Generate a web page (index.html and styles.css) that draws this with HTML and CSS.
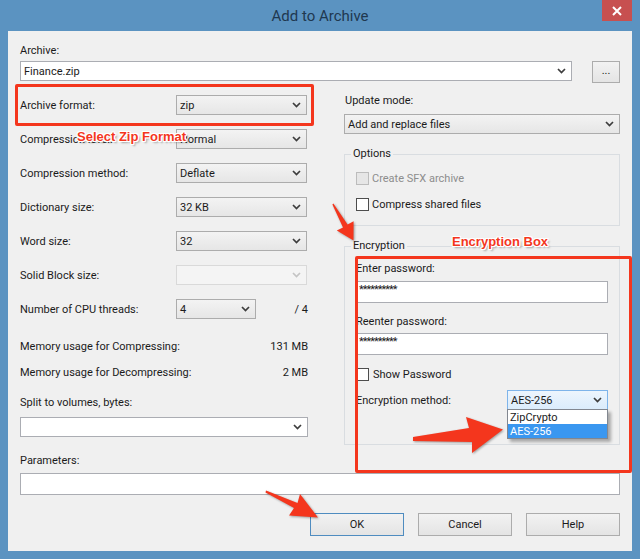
FILE: index.html
```html
<!DOCTYPE html>
<html>
<head>
<meta charset="utf-8">
<link rel="stylesheet" href="styles.css">
</head>
<body>
<div class="window">
  <div class="titlebar">
    <div class="title">Add to Archive</div>
    <div class="close"><svg width="10" height="10" viewBox="0 0 10 10"><path d="M1 1L9 9M9 1L1 9" stroke="#fff" stroke-width="2"/></svg></div>
  </div>
  <div class="content">
    <div class="lbl top-lbl">Archive:</div>
    <div class="archive-row">
      <div class="combo white archive-combo"><span class="val">Finance.zip</span><svg class="chev" width="9" height="6" viewBox="0 0 9 6"><path d="M1 1l3.5 3.5L8 1" fill="none" stroke="#3d3d3d" stroke-width="1.7"/></svg></div>
      <div class="btn browse">...</div>
    </div>
    <div class="cols">
      <div class="col-left">
        <div class="row"><span class="rl">Archive format:</span><div class="combo"><span class="val">zip</span><svg class="chev" width="9" height="6" viewBox="0 0 9 6"><path d="M1 1l3.5 3.5L8 1" fill="none" stroke="#3d3d3d" stroke-width="1.7"/></svg></div></div>
        <div class="row"><span class="rl">Compression level:</span><div class="combo"><span class="val">Normal</span><svg class="chev" width="9" height="6" viewBox="0 0 9 6"><path d="M1 1l3.5 3.5L8 1" fill="none" stroke="#3d3d3d" stroke-width="1.7"/></svg></div></div>
        <div class="row"><span class="rl">Compression method:</span><div class="combo"><span class="val">Deflate</span><svg class="chev" width="9" height="6" viewBox="0 0 9 6"><path d="M1 1l3.5 3.5L8 1" fill="none" stroke="#3d3d3d" stroke-width="1.7"/></svg></div></div>
        <div class="row"><span class="rl">Dictionary size:</span><div class="combo"><span class="val">32 KB</span><svg class="chev" width="9" height="6" viewBox="0 0 9 6"><path d="M1 1l3.5 3.5L8 1" fill="none" stroke="#3d3d3d" stroke-width="1.7"/></svg></div></div>
        <div class="row"><span class="rl">Word size:</span><div class="combo"><span class="val">32</span><svg class="chev" width="9" height="6" viewBox="0 0 9 6"><path d="M1 1l3.5 3.5L8 1" fill="none" stroke="#3d3d3d" stroke-width="1.7"/></svg></div></div>
        <div class="row"><span class="rl">Solid Block size:</span><div class="combo disabled"><span class="val"></span><svg class="chev" width="9" height="6" viewBox="0 0 9 6"><path d="M1 1l3.5 3.5L8 1" fill="none" stroke="#c4c4c4" stroke-width="1.7"/></svg></div></div>
        <div class="row"><span class="rl">Number of CPU threads:</span><div class="combo short"><span class="val">4</span><svg class="chev" width="9" height="6" viewBox="0 0 9 6"><path d="M1 1l3.5 3.5L8 1" fill="none" stroke="#3d3d3d" stroke-width="1.7"/></svg></div><span class="cpu-max">/ 4</span></div>
        <div class="mem first"><span>Memory usage for Compressing:</span><span>131 MB</span></div>
        <div class="mem"><span>Memory usage for Decompressing:</span><span>2 MB</span></div>
        <div class="lbl split-lbl">Split to volumes, bytes:</div>
        <div class="combo white split-combo"><span class="val"></span><svg class="chev" width="9" height="6" viewBox="0 0 9 6"><path d="M1 1l3.5 3.5L8 1" fill="none" stroke="#3d3d3d" stroke-width="1.7"/></svg></div>
      </div>
      <div class="col-right">
        <div class="lbl update-lbl">Update mode:</div>
        <div class="combo wide update-combo"><span class="val">Add and replace files</span><svg class="chev" width="9" height="6" viewBox="0 0 9 6"><path d="M1 1l3.5 3.5L8 1" fill="none" stroke="#3d3d3d" stroke-width="1.7"/></svg></div>
        <fieldset class="group options">
          <legend>Options</legend>
          <div class="check disabled"><span class="box"></span><span>Create SFX archive</span></div>
          <div class="check second"><span class="box"></span><span>Compress shared files</span></div>
        </fieldset>
        <fieldset class="group encryption">
          <legend>Encryption</legend>
          <div class="lbl">Enter password:</div>
          <div class="input pw pw1">**********</div>
          <div class="lbl re-lbl">Reenter password:</div>
          <div class="input pw pw2">**********</div>
          <div class="check show-pw"><span class="box"></span><span>Show Password</span></div>
          <div class="enc-row">
            <span>Encryption method:</span>
            <div class="enc-wrap">
              <div class="combo focus enc-combo"><span class="val">AES-256</span><svg class="chev" width="9" height="6" viewBox="0 0 9 6"><path d="M1 1l3.5 3.5L8 1" fill="none" stroke="#3d3d3d" stroke-width="1.7"/></svg></div>
              <div class="dropdown">
                <div class="item">ZipCrypto</div>
                <div class="item sel">AES-256</div>
              </div>
            </div>
          </div>
        </fieldset>
      </div>
    </div>
    <div class="lbl params-lbl">Parameters:</div>
    <div class="input params"></div>
    <div class="buttons">
      <div class="btn ok">OK</div>
      <div class="btn">Cancel</div>
      <div class="btn">Help</div>
    </div>

    <div class="redbox box-format"></div>
    <div class="redbox box-enc"></div>
    <div class="note note-zip">Select Zip Format</div>
    <div class="note note-enc">Encryption Box</div>
  </div>
  <svg class="arrows" width="640" height="559" viewBox="0 0 640 559">
    <polygon points="333.4,203.6 347.6,224.6 353.6,221.2 353.5,240.5 336.8,230.6 343,227.4 332.4,204.4" fill="#f4361d"/>
    <polygon points="413,437 469,428 466,417 503,429.5 472,453 472,442 413,441" fill="#f4361d"/>
    <polygon points="266,490.5 297.5,503 300,494 318,517.5 289,515.5 294,508 265.5,492.5" fill="#f4361d"/>
  </svg>
</div>
</body>
</html>
```
FILE: styles.css
```css
body {
  margin: 0;
  background: #ffffff;
}

.window {
  position: relative;
  width: 640px;
  height: 559px;
  box-sizing: border-box;
  background: #5b93c1;
  padding: 0 8px 8px 8px;
  font-family: Roboto, "Liberation Sans", sans-serif;
  font-size: 11px;
  color: #1b1b1b;
}

.titlebar {
  height: 31px;
  display: grid;
  grid-template-columns: 1fr auto 1fr;
  align-items: start;
}

.title {
  grid-column: 2;
  font-size: 15px;
  line-height: 32px;
  color: #1f3850;
}

.close {
  grid-column: 3;
  justify-self: end;
  width: 30px;
  height: 21px;
  background: #c75050;
  display: flex;
  align-items: center;
  justify-content: center;
}

.content {
  position: relative;
  height: 520px;
  box-sizing: border-box;
  background: #f0f0f0;
  padding: 12px 12px 0 12px;
}

.lbl {
  line-height: 14px;
  height: 14px;
}

.top-lbl {
  line-height: 16px;
}

.archive-row {
  display: flex;
  align-items: flex-start;
  margin-top: 4px;
  height: 22px;
}

.combo {
  box-sizing: border-box;
  width: 131px;
  height: 20px;
  border: 1px solid #acacac;
  background: linear-gradient(#f3f3f3, #e6e6e6);
  display: flex;
  align-items: center;
  padding: 0 5px 0 3px;
}

.combo .val {
  flex: 1;
  line-height: 18px;
  padding-top: 1px;
}

.combo.white {
  background: #ffffff;
  border-color: #abadb3;
}

.combo.disabled {
  background: #f4f4f4;
  border-color: #d9d9d9;
}

.combo.short {
  width: 80px;
}

.archive-combo {
  width: 552px;
}

.btn {
  box-sizing: border-box;
  width: 94px;
  height: 23px;
  border: 1px solid #acacac;
  background: linear-gradient(#f2f2f2, #e4e4e4);
  display: flex;
  align-items: center;
  justify-content: center;
}

.browse {
  margin-left: auto;
  width: 28px;
  height: 22px;
  padding-bottom: 3px;
}

.btn.ok {
  border-color: #4f8cc0;
}

.cols {
  display: flex;
  gap: 36px;
  margin-top: 5px;
}

.col-left {
  width: 288px;
}

.col-right {
  width: 276px;
}

.row {
  display: flex;
  align-items: center;
  height: 34px;
}

.rl {
  flex: 0 0 156px;
}

.cpu-max {
  margin-left: auto;
}

.mem {
  display: flex;
  justify-content: space-between;
  align-items: center;
  height: 26px;
  padding-top: 1px;
  box-sizing: border-box;
}

.mem.first {
  margin-top: 7px;
}

.split-lbl {
  margin-top: 11px;
}

.split-combo {
  width: 288px;
  margin-top: 7px;
}

.update-lbl {
  margin-top: 6px;
  padding-left: 1px;
}

.update-combo {
  width: 276px;
  margin-top: 6px;
}

.group {
  margin: 0;
  min-width: 0;
  border: 1px solid #d9dde1;
  padding: 9px 11px 13px 11px;
}

.group legend {
  padding: 0 2px;
  margin-left: -5px;
  line-height: 14px;
}

.options {
  margin-top: 13px;
}

.encryption {
  margin-top: 13px;
  padding-bottom: 34px;
}

.check {
  display: flex;
  align-items: center;
  gap: 3px;
  height: 16px;
}

.check .box {
  box-sizing: border-box;
  width: 13px;
  height: 13px;
  border: 1px solid #4d4d4d;
  background: #ffffff;
}

.check.disabled {
  color: #8d8d8d;
}

.check.disabled .box {
  border-color: #bcbcbc;
  background: #e6e6e6;
}

.check.second {
  margin-top: 10px;
}

.input {
  box-sizing: border-box;
  height: 22px;
  border: 1px solid #abadb3;
  background: #ffffff;
}

.pw {
  padding: 2px 0 0 2px;
  font-size: 11px;
  letter-spacing: -1px;
  line-height: 12px;
}

.pw1 {
  margin-top: 5px;
}

.re-lbl {
  margin-top: 12px;
}

.pw2 {
  margin-top: 4px;
}

.show-pw {
  margin-top: 11px;
  gap: 4px;
}

.enc-row {
  display: flex;
  align-items: center;
  justify-content: space-between;
  margin-top: 8px;
  height: 20px;
}

.enc-wrap {
  position: relative;
}

.enc-combo {
  width: 101px;
}

.combo.focus {
  border-color: #7eb4ea;
  background: linear-gradient(#edf5fd, #dbecfc);
}

.dropdown {
  position: absolute;
  top: 19px;
  left: 0;
  width: 101px;
  box-sizing: border-box;
  border: 1px solid #828790;
  background: #ffffff;
  box-shadow: 3px 3px 3px rgba(0, 0, 0, 0.3);
}

.item {
  height: 14px;
  line-height: 15px;
  padding-left: 2px;
}

.item.sel {
  background: #3a97f0;
  color: #ffffff;
}

.params-lbl {
  margin-top: 9px;
}

.params {
  margin-top: 5px;
  width: 600px;
}

.buttons {
  display: flex;
  justify-content: flex-end;
  gap: 14px;
  margin-top: 18px;
}

.redbox {
  position: absolute;
  box-sizing: border-box;
  border: 3px solid #f4361d;
  border-radius: 2px;
}

.box-format {
  left: 7px;
  top: 53px;
  width: 299px;
  height: 42px;
}

.box-enc {
  left: 347px;
  top: 225px;
  width: 277px;
  height: 217px;
}

.note {
  position: absolute;
  font-family: "Liberation Sans", Arial, sans-serif;
  font-weight: bold;
  font-size: 13px;
  line-height: 16px;
  color: #f4361d;
  text-shadow: 1px 0 0 #fff, -1px 0 0 #fff, 0 1px 0 #fff, 0 -1px 0 #fff,
    1px 1px 0 #fff, -1px -1px 0 #fff, 1px -1px 0 #fff, -1px 1px 0 #fff,
    2px 2px 2px rgba(0, 0, 0, 0.35);
}

.note-zip {
  left: 69px;
  top: 98px;
}

.note-enc {
  left: 444px;
  top: 203px;
}

.arrows {
  position: absolute;
  left: 0;
  top: 0;
  pointer-events: none;
  filter: drop-shadow(1px 1px 1px rgba(0, 0, 0, 0.35));
}
```
